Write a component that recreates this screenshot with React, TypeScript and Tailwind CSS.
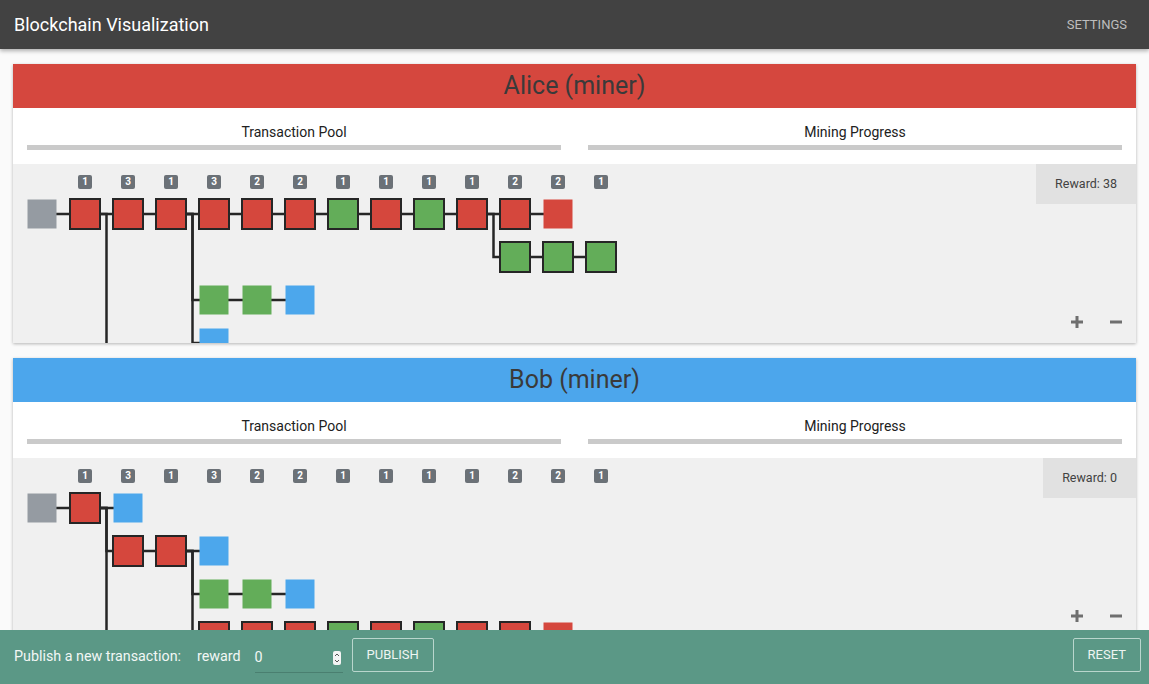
import React from "react";

type Segment = {
  row: number;
  start: number;
  parentRow: number;
  items: string; // uppercase = confirmed (bordered), lowercase = pending, x = genesis
};

interface Miner {
  name: string;
  barColor: string;
  reward: number;
  segments: Segment[];
}

const BADGES = [1, 3, 1, 3, 2, 2, 1, 1, 1, 1, 2, 2, 1];

const FILL: Record<string, string> = {
  r: "#d5473d",
  g: "#63ad59",
  b: "#4ca7ec",
  x: "#959ba2",
};

const miners: Miner[] = [
  {
    name: "Alice (miner)",
    barColor: "bg-[#d5473e]",
    reward: 38,
    segments: [
      { row: 0, start: 0, parentRow: 0, items: "x" },
      { row: 0, start: 1, parentRow: 0, items: "RRRRRRGRGRRr" },
      { row: 1, start: 11, parentRow: 0, items: "GGG" },
      { row: 2, start: 4, parentRow: 0, items: "ggb" },
      { row: 3, start: 4, parentRow: 0, items: "b" },
      { row: 4, start: 2, parentRow: 0, items: "R" },
    ],
  },
  {
    name: "Bob (miner)",
    barColor: "bg-[#4ca6ec]",
    reward: 0,
    segments: [
      { row: 0, start: 0, parentRow: 0, items: "x" },
      { row: 0, start: 1, parentRow: 0, items: "Rb" },
      { row: 1, start: 2, parentRow: 0, items: "RRb" },
      { row: 2, start: 4, parentRow: 1, items: "ggb" },
      { row: 3, start: 4, parentRow: 1, items: "RRRGRGRRr" },
      { row: 4, start: 2, parentRow: 0, items: "R" },
    ],
  },
];

const cx = (col: number) => 29 + 43 * col;
const cy = (row: number) => 50 + 43 * row;

function ChainTree({ segments }: { segments: Segment[] }) {
  const lines: React.ReactNode[] = [];
  const blocks: React.ReactNode[] = [];

  segments.forEach((seg, si) => {
    const y = cy(seg.row);
    if (seg.start > 0) {
      const px = cx(seg.start - 1);
      if (seg.parentRow === seg.row) {
        lines.push(
          <line key={`p${si}`} x1={px} y1={y} x2={cx(seg.start)} y2={y} />
        );
      } else {
        const bx = px + 21.5;
        lines.push(
          <path
            key={`p${si}`}
            d={`M${px} ${cy(seg.parentRow)} H${bx} V${y} H${cx(seg.start)}`}
            fill="none"
          />
        );
      }
    }
    seg.items.split("").forEach((ch, k) => {
      const col = seg.start + k;
      const x = cx(col);
      if (k > 0) {
        lines.push(
          <line key={`l${si}-${k}`} x1={cx(col - 1)} y1={y} x2={x} y2={y} />
        );
      }
      const confirmed = ch !== ch.toLowerCase();
      const fill = FILL[ch.toLowerCase()];
      blocks.push(
        confirmed ? (
          <rect
            key={`b${si}-${k}`}
            x={x - 15}
            y={y - 15}
            width={30}
            height={30}
            fill={fill}
            stroke="#262626"
            strokeWidth={2}
          />
        ) : (
          <rect
            key={`b${si}-${k}`}
            x={x - 14.5}
            y={y - 14.5}
            width={29}
            height={29}
            fill={fill}
          />
        )
      );
    });
  });

  return (
    <svg className="absolute left-0 top-0" width={1123} height={280}>
      <g stroke="#262626" strokeWidth={2.5}>{lines}</g>
      {blocks}
    </svg>
  );
}

function ZoomControls() {
  return (
    <div className="absolute bottom-[15px] right-[14px] flex items-center gap-[27px]">
      <svg width="12" height="12" viewBox="0 0 12 12">
        <rect x="4.5" y="0" width="3" height="12" fill="#6f6f6f" />
        <rect x="0" y="4.5" width="12" height="3" fill="#6f6f6f" />
      </svg>
      <svg width="12" height="12" viewBox="0 0 12 12">
        <rect x="0" y="4.5" width="12" height="3" fill="#6f6f6f" />
      </svg>
    </div>
  );
}

function MinerCard({ miner }: { miner: Miner }) {
  return (
    <div className="bg-white shadow-[0_1px_3px_rgba(0,0,0,0.28)]">
      <div
        className={`${miner.barColor} h-[44px] flex items-center justify-center text-[25px] text-[#3a3a3a]`}
      >
        {miner.name}
      </div>
      <div className="grid grid-cols-2 gap-[27px] px-[14px] pt-[14px] h-[56px]">
        {["Transaction Pool", "Mining Progress"].map(t => (
          <div key={t}>
            <div className="text-center text-[14px] leading-5 text-[#212121]">
              {t}
            </div>
            <div className="mt-[3px] h-[5px] bg-[#cacaca]" />
          </div>
        ))}
      </div>
      <div className="relative h-[179px] overflow-hidden bg-[#f0f0f0]">
        <ChainTree segments={miner.segments} />
        <div className="relative flex gap-[29px] pl-[65px] pt-[11px]">
          {BADGES.map((n, i) => (
            <div
              key={i}
              className="w-[14px] h-[14px] rounded-[2px] bg-[#6b7177] text-white text-[10px] font-bold leading-[14px] text-center"
            >
              {n}
            </div>
          ))}
        </div>
        <div className="absolute right-0 top-0 h-10 px-[19px] flex items-center bg-[#e1e1e1] text-[12.5px] text-[#424242]">
          Reward: {miner.reward}
        </div>
        <ZoomControls />
      </div>
    </div>
  );
}

export default function App() {
  return (
    <div className="min-h-screen bg-[#fafafa] font-['Roboto','Liberation_Sans',sans-serif]">
      <header className="relative z-10 h-[49px] bg-[#424242] flex items-center justify-between pl-[14px] pr-[22px] shadow-[0_2px_4px_rgba(0,0,0,0.3)]">
        <div className="text-[18px] text-white">Blockchain Visualization</div>
        <div className="text-[13px] text-[#bdbdbd] uppercase">Settings</div>
      </header>
      <main className="px-[13px] pt-[15px] pb-[70px] flex flex-col gap-[15px]">
        {miners.map(m => (
          <MinerCard key={m.name} miner={m} />
        ))}
      </main>
      <div className="fixed bottom-0 left-0 right-0 z-20 h-[54px] bg-[#5b9886] flex items-center pl-[14px] pr-[8px] text-[14.3px] text-[#f2f7f5]">
        <span>Publish a new transaction:</span>
        <span className="ml-[16px]">reward</span>
        <div className="ml-[14px] w-[88px] h-[30px] mt-[2px] border-b border-[#4a7f70] flex items-center justify-between">
          <span>0</span>
          <svg width="8" height="14" viewBox="0 0 8 14" className="mr-[2px]">
            <rect x="0" y="0" width="8" height="14" rx="2" fill="#f4f4f4" />
            <path d="M2 5 L4 3 L6 5" stroke="#555" strokeWidth="1" fill="none" />
            <path d="M2 9 L4 11 L6 9" stroke="#555" strokeWidth="1" fill="none" />
          </svg>
        </div>
        <button className="ml-[9px] mb-[4px] h-[34px] px-[14px] border border-[#b9d6cd] rounded-[2px] text-[13px] uppercase text-[#eef5f2]">
          Publish
        </button>
        <button className="ml-auto mb-[4px] h-[34px] px-[14px] border border-[#b9d6cd] rounded-[2px] text-[13px] uppercase text-[#eef5f2]">
          Reset
        </button>
      </div>
    </div>
  );
}
